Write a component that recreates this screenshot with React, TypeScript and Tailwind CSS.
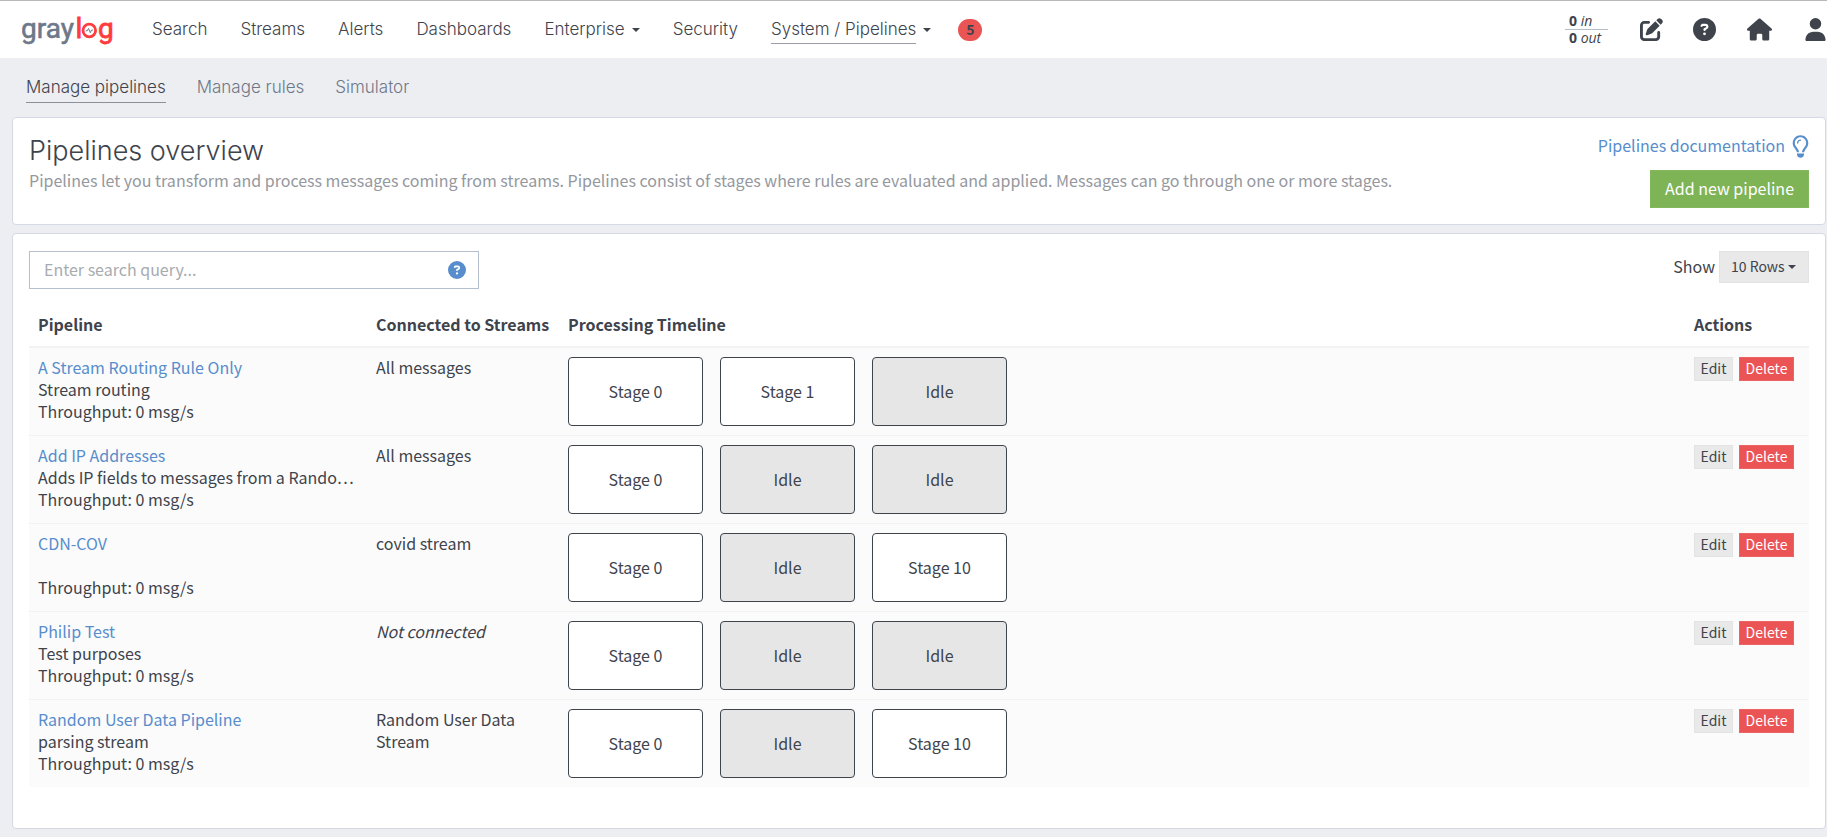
import { useState } from 'react';
import type { ReactNode } from 'react';
import {
  FaCircleQuestion,
  FaHouse,
  FaPenToSquare,
  FaRegLightbulb,
  FaUser,
} from 'react-icons/fa6';

const STAGE_STYLES = {
  used: 'bg-white',
  idle: 'bg-[#e6e6e6]',
};

type Pipeline = {
  title: string;
  description: string;
  stream: string | null;
  stages: (number | null)[];
};

const PIPELINES: Pipeline[] = [
  { title: 'A Stream Routing Rule Only', description: 'Stream routing', stream: 'All messages', stages: [0, 1, null] },
  {
    title: 'Add IP Addresses',
    description: 'Adds IP fields to messages from a Rando…',
    stream: 'All messages',
    stages: [0, null, null],
  },
  { title: 'CDN-COV', description: '', stream: 'covid stream', stages: [0, null, 10] },
  { title: 'Philip Test', description: 'Test purposes', stream: null, stages: [0, null, null] },
  {
    title: 'Random User Data Pipeline',
    description: 'parsing stream',
    stream: 'Random User Data Stream',
    stages: [0, null, 10],
  },
];

function Logo() {
  return (
    <a href="#" aria-label="graylog" className="block w-[92px]">
      <svg viewBox="0 0 92 34" className="block h-[34px] w-[92px]" fontFamily="Roboto, sans-serif" fontSize="28">
        <text x="-1" y="25" fill="#6e7889" stroke="#6e7889" strokeWidth="0.6">gray</text>
        <text x="53.5" y="25" fill="#ff3b3e" stroke="#ff3b3e" strokeWidth="0.8">l</text>
        <circle cx="67.3" cy="17.5" r="6.3" fill="none" stroke="#ff3b3e" strokeWidth="2.8" />
        <text x="76" y="25" fill="#ff3b3e" stroke="#ff3b3e" strokeWidth="0.8">g</text>
        <path d="M63.8 17.8h1.5l1.2-2.3 1.8 4.2 1.2-2.6h1.6" fill="none" stroke="#6e7889" strokeWidth="1" />
      </svg>
    </a>
  );
}

function Caret({ className = '' }: { className?: string }) {
  return (
    <svg viewBox="0 0 8 4" className={`h-1 w-2 ${className}`} fill="currentColor" aria-hidden="true">
      <path d="M0 0h8L4 4z" />
    </svg>
  );
}

function NavItem({ children, active, caret }: { children: ReactNode; active?: boolean; caret?: boolean }) {
  const line = active ? 'border-[#9a9da3]' : 'border-transparent';
  return (
    <a href="#" className="flex items-center gap-[7px]">
      <span className={`border-b leading-7 ${line}`}>{children}</span>
      {caret && <Caret />}
    </a>
  );
}

function TopBar() {
  return (
    <header className="flex h-[58px] items-center border-t border-[#b9b9b9] bg-white pl-[22px] text-[#3e434c]">
      <Logo />
      <nav className="ml-[38px] flex items-center gap-[33px] font-[Inter,sans-serif] text-[17px] font-light">
        <NavItem>Search</NavItem>
        <NavItem>Streams</NavItem>
        <NavItem>Alerts</NavItem>
        <NavItem>Dashboards</NavItem>
        <NavItem caret>Enterprise</NavItem>
        <NavItem>Security</NavItem>
        <NavItem active caret>System / Pipelines</NavItem>
      </nav>
      <a
        href="#"
        className="ml-[27px] flex h-[22px] w-6 items-center justify-center rounded-full bg-[#eb5454] pb-px font-['Noto_Sans_CJK_KR',sans-serif] text-[14px] font-bold"
      >
        5
      </a>
      <div className="ml-auto flex items-center">
        <a href="#" className="mr-8 block w-[43px] font-['Open_Sans',sans-serif] text-[14px] leading-4">
          <span className="block border-b border-[#b4bfcb] pl-1">
            <b>0</b> <i>in</i>
          </span>
          <span className="block pl-1">
            <b>0</b> <i>out</i>
          </span>
        </a>
        <button type="button" aria-label="Scratchpad" className="mr-[30px]">
          <FaPenToSquare className="size-[23px]" />
        </button>
        <button type="button" aria-label="Help" className="mr-[31px]">
          <FaCircleQuestion className="size-[23px]" />
        </button>
        <a href="#" aria-label="Home" className="mr-[32px]">
          <FaHouse className="size-[25px]" />
        </a>
        <button type="button" aria-label="User menu">
          <FaUser className="size-[23px]" />
        </button>
      </div>
    </header>
  );
}

function SubNav() {
  return (
    <nav className="flex gap-[31px] px-[26px] pt-[14px] pb-[14px] font-[Inter,sans-serif] text-[17px] leading-[30px] font-light text-[#6e7889]">
      <a href="#" className="border-b border-[#8d9097] text-[#3e434c]">Manage pipelines</a>
      <a href="#">Manage rules</a>
      <a href="#">Simulator</a>
    </nav>
  );
}

function OverviewCard() {
  return (
    <section className="flex min-h-[108px] justify-between rounded border border-[#d5d9e4] bg-white px-4">
      <div className="pt-[17px]">
        <h1 className="font-[Inter,sans-serif] text-[27px] leading-8 font-light">Pipelines overview</h1>
        <p className="leading-[26px] text-[#95989e]">
          Pipelines let you transform and process messages coming from streams. Pipelines consist of stages where rules
          are evaluated and applied. Messages can go through one or more stages.
        </p>
      </div>
      <div className="flex flex-col items-end gap-[11px] pt-4">
        <a href="#" className="flex items-center gap-[7px] text-[#578dcc]">
          <span className="pb-[2px] leading-[23px]">Pipelines documentation</span>
          <FaRegLightbulb className="h-[23px] w-[17px]" />
        </a>
        <button type="button" className="h-[38px] border border-[#84b85e] bg-[#7eb356] px-[14px] pb-[2px] text-white">
          Add new pipeline
        </button>
      </div>
    </section>
  );
}

function Toolbar() {
  const [query, setQuery] = useState('');
  return (
    <div className="flex items-start justify-between">
      <form className="flex h-[38px] w-[450px] items-center border border-[#b5bfcd] pr-3">
        <input
          type="text"
          aria-label="Search pipelines"
          placeholder="Enter search query..."
          value={query}
          onChange={(event) => setQuery(event.target.value)}
          className="h-full min-w-0 flex-1 px-[14px] pb-[2px] outline-none placeholder:text-[#a8abb0]"
        />
        <button type="button" aria-label="Search syntax help" className="text-[#578dcc]">
          <FaCircleQuestion className="size-[18px]" />
        </button>
      </form>
      <div className="flex items-center gap-1">
        <label htmlFor="page-size" className="pb-[2px]">Show</label>
        <div className="grid h-8 w-[90px] items-center border border-[#e3e3e3] bg-[#e9e9e9]">
          <select
            id="page-size"
            className="col-start-1 row-start-1 h-full w-full appearance-none pb-[2px] pl-[11px] text-[14px] outline-none"
          >
            <option>10 Rows</option>
            <option>25 Rows</option>
            <option>50 Rows</option>
          </select>
          <Caret className="pointer-events-none col-start-1 row-start-1 mr-3 justify-self-end" />
        </div>
      </div>
    </div>
  );
}

function Stage({ stage }: { stage: number | null }) {
  const style = stage === null ? STAGE_STYLES.idle : STAGE_STYLES.used;
  return (
    <li className={`flex h-[69px] w-[135px] items-center justify-center rounded border border-[#3e434c] pb-[2px] ${style}`}>
      {stage === null ? 'Idle' : `Stage ${stage}`}
    </li>
  );
}

function PipelineRow({ pipeline }: { pipeline: Pipeline }) {
  return (
    <tr className="border-t border-[#f3f3f4] bg-[#fbfbfb] align-top first:border-t-2">
      <td className="px-[9px] pt-2">
        <a href="#" className="text-[#578dcc]">{pipeline.title}</a>
        <p className="min-h-[22px] whitespace-nowrap">{pipeline.description}</p>
        <p>Throughput: 0 msg/s</p>
      </td>
      <td className="px-[9px] pt-2">{pipeline.stream ?? <i>Not connected</i>}</td>
      <td className="p-[9px]">
        <ul className="flex gap-[17px]">
          {pipeline.stages.map((stage, index) => (
            <Stage key={index} stage={stage} />
          ))}
        </ul>
      </td>
      <td className="p-[9px]">
        <div className="flex gap-[6px] text-[14px] leading-5">
          <button type="button" className="w-[39px] border border-[#e3e3e3] bg-[#e9e9e9] pb-[2px]">Edit</button>
          <button type="button" className="w-[55px] border border-[#ee6363] bg-[#eb5454] pb-[2px] text-white">Delete</button>
        </div>
      </td>
    </tr>
  );
}

export default function App() {
  return (
    <div className="min-h-screen bg-[#edeef2] font-['Noto_Sans_CJK_KR','Noto_Sans',sans-serif] text-[16px] leading-[22px] text-[#3e434c]">
      <TopBar />
      <SubNav />
      <main className="flex flex-col gap-2 pr-px pb-2 pl-3">
        <OverviewCard />
        <section className="rounded border border-[#d5d9e4] bg-white px-4 pt-[17px] pb-[41px]">
          <Toolbar />
          <table className="mt-[13px] w-full table-fixed border-collapse">
            <thead>
              <tr className="h-[45px] text-left">
                <th className="w-[338px] px-[9px]">Pipeline</th>
                <th className="w-[192px] px-[9px] whitespace-nowrap">Connected to Streams</th>
                <th className="px-[9px]">Processing Timeline</th>
                <th className="w-[124px] px-[9px]">Actions</th>
              </tr>
            </thead>
            <tbody>
              {PIPELINES.map((pipeline) => (
                <PipelineRow key={pipeline.title} pipeline={pipeline} />
              ))}
            </tbody>
          </table>
        </section>
      </main>
    </div>
  );
}
